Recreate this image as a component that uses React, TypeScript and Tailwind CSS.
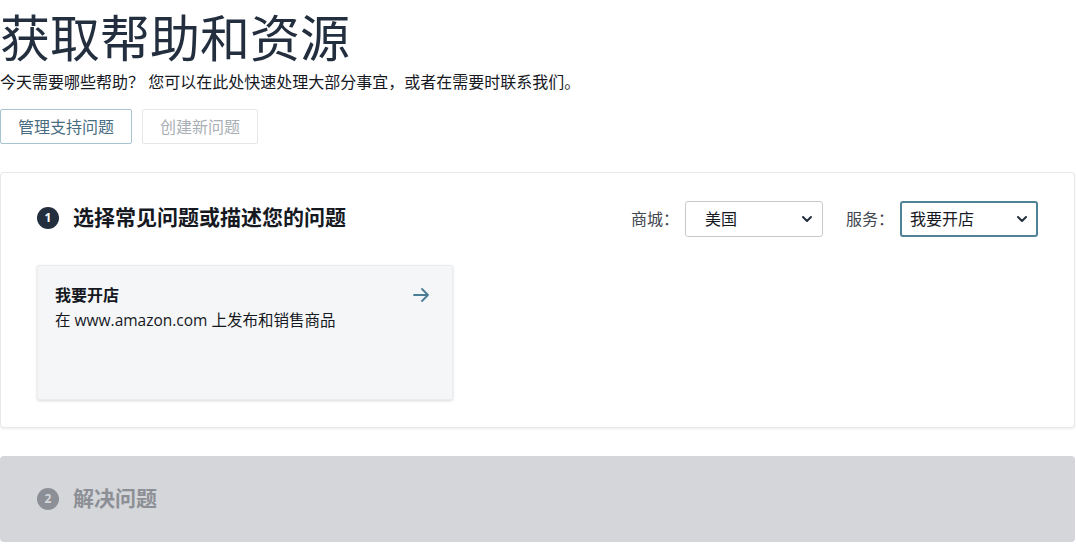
import React from "react";

function Chevron() {
  return (
    <svg width="14" height="14" viewBox="0 0 14 14" fill="none" className="shrink-0">
      <path d="M3 5l4 4 4-4" stroke="#232f3e" strokeWidth="2" strokeLinecap="round" strokeLinejoin="round" />
    </svg>
  );
}

function Arrow() {
  return (
    <svg width="17" height="14" viewBox="0 0 17 14" fill="none" className="shrink-0">
      <path d="M1 7h14M9 1l6 6-6 6" stroke="#4b7d96" strokeWidth="1.8" strokeLinecap="round" strokeLinejoin="round" />
    </svg>
  );
}

export default function App() {
  return (
    <div className="w-[1076px] h-[549px] overflow-hidden bg-white font-['Open_Sans','Noto_Sans_CJK_SC',sans-serif] text-[#16191f]">
      <h1 className="text-[50px] leading-[60px] pt-[8px] font-normal text-[#232f3e]">获取帮助和资源</h1>
      <p className="text-[16px] leading-[24px] mt-[2px] text-[#16191f]">今天需要哪些帮助？ 您可以在此处快速处理大部分事宜，或者在需要时联系我们。</p>
      <div className="flex gap-[10px] mt-[15px]">
        <button className="h-[35px] px-[17px] border border-[#a8c3d0] rounded-[2px] text-[16px] text-[#4a6d82] bg-white">管理支持问题</button>
        <button className="h-[35px] px-[17px] border border-[#e4e7ea] rounded-[2px] text-[16px] text-[#a9afb5] bg-white">创建新问题</button>
      </div>

      <div className="w-[1075px] mt-[28px] border border-[#e6e8ea] rounded-[4px] bg-white shadow-[0_1px_3px_rgba(0,0,0,0.08)] px-[36px] pt-[28px] pb-[27px]">
        <div className="flex items-center justify-between h-[36px]">
          <div className="flex items-center gap-[14px] -mt-[3px]">
            <div className="w-[22px] h-[22px] rounded-full bg-[#232f3e] text-white text-[12px] font-bold flex items-center justify-center">1</div>
            <div className="text-[21px] font-bold text-[#16191f]">选择常见问题或描述您的问题</div>
          </div>
          <div className="flex items-center">
            <span className="text-[16px] text-[#414750] mr-[6px]">商城：</span>
            <div className="w-[138px] h-[36px] border border-[#c6cacd] rounded-[3px] flex items-center justify-between pl-[19px] pr-[8px]">
              <span className="text-[16px]">美国</span>
              <Chevron />
            </div>
            <span className="text-[16px] text-[#414750] ml-[23px] mr-[6px]">服务：</span>
            <div className="w-[138px] h-[36px] border-2 border-[#4f8297] rounded-[3px] flex items-center justify-between pl-[8px] pr-[7px]">
              <span className="text-[16px]">我要开店</span>
              <Chevron />
            </div>
          </div>
        </div>

        <div className="mt-[28px] w-[416px] h-[135px] bg-[#f5f6f7] border border-[#eaeced] rounded-[2px] shadow-[0_1px_3px_rgba(0,0,0,0.15)] pl-[17px] pr-[22px] pt-[18px]">
          <div className="flex items-center justify-between">
            <div className="text-[16px] font-bold leading-[22px] text-[#16191f]">我要开店</div>
            <Arrow />
          </div>
          <div className="text-[15.5px] leading-[22px] mt-[3px] text-[#16191f]">在 www.amazon.com 上发布和销售商品</div>
        </div>
      </div>

      <div className="w-[1075px] mt-[28px] h-[86px] bg-[#d5d6da] rounded-[4px] px-[37px] flex items-center gap-[14px]">
        <div className="w-[22px] h-[22px] rounded-full bg-[#8c9096] text-[#d5d6da] text-[12px] font-bold flex items-center justify-center">2</div>
        <div className="text-[21px] font-bold text-[#8c9096]">解决问题</div>
      </div>
    </div>
  );
}
